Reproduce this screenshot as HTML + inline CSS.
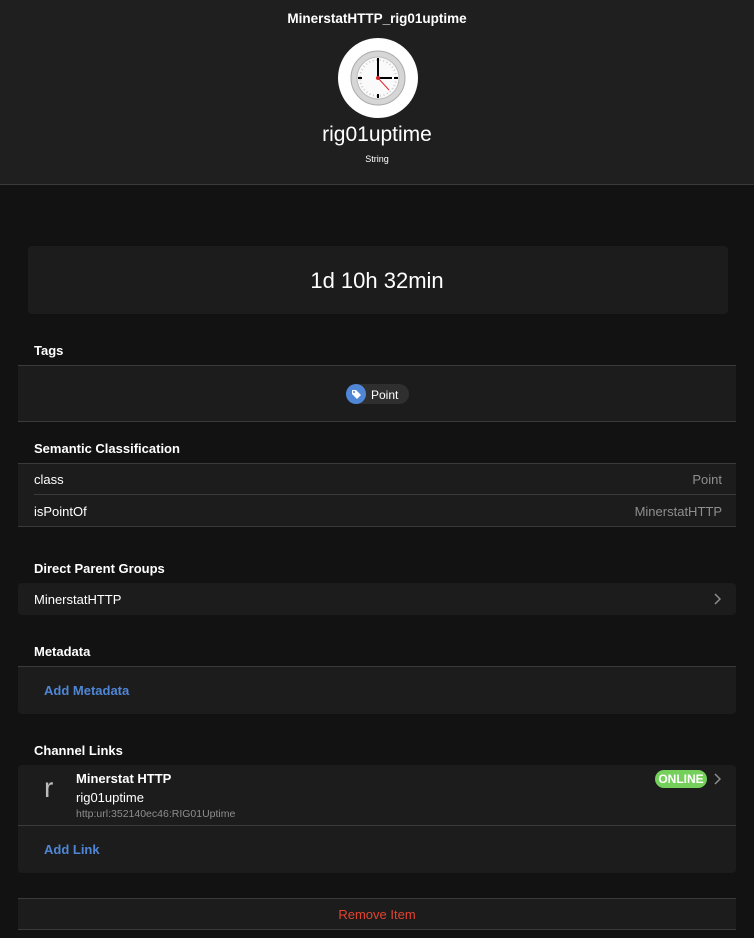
<!DOCTYPE html>
<html><head><meta charset="utf-8"><style>
*{margin:0;padding:0;box-sizing:border-box}
body{width:754px;height:938px;background:#121212;font-family:"Liberation Sans",sans-serif;color:#fff;position:relative;overflow:hidden;font-size:13px}
.a{position:absolute}
.hdr{left:0;top:0;width:754px;height:185px;background:#1f1f1f;border-bottom:1px solid #3a3a3a}
.card{background:#1c1c1c;left:18px;width:718px}
.t{font-weight:bold;font-size:13px}
.line{height:1px;background:#3a3a3a}
.g{color:#8e8e8e}
.blue{color:#4f86d6;font-weight:bold}
</style></head><body>
<div class="a hdr"></div>
<div class="a t" style="left:0;width:754px;top:11px;text-align:center;font-size:13.5px">MinerstatHTTP_rig01uptime</div>
<div class="a" style="left:338px;top:38px;width:80px;height:80px;border-radius:50%;background:#fff"></div>
<svg class="a" style="left:350px;top:50px" width="56" height="56" viewBox="0 0 56 56">
<circle cx="28" cy="28" r="27" fill="#d6d6d6" stroke="#aaa" stroke-width="1"/>
<circle cx="28" cy="28" r="21" fill="#fafafa" stroke="#bbb" stroke-width="1"/>
<circle cx="28" cy="28" r="18" fill="none" stroke="#ccc" stroke-width="2" stroke-dasharray="1 2.6"/>
<rect x="27" y="8" width="2" height="4" fill="#000"/><rect x="27" y="44" width="2" height="4" fill="#000"/>
<rect x="8" y="27" width="4" height="2" fill="#000"/><rect x="44" y="27" width="4" height="2" fill="#000"/>
<line x1="28" y1="28" x2="28" y2="11" stroke="#000" stroke-width="2"/>
<line x1="28" y1="28" x2="42" y2="28" stroke="#000" stroke-width="2"/>
<line x1="28" y1="28" x2="39" y2="40" stroke="#d22" stroke-width="1"/>
<circle cx="28" cy="28" r="2" fill="#d22"/>
</svg>
<div class="a" style="left:0;width:754px;top:123px;text-align:center;font-size:21px">rig01uptime</div>
<div class="a" style="left:0;width:754px;top:154px;text-align:center;font-size:9px">String</div>

<div class="a card" style="top:246px;height:68px;border-radius:4px;left:28px;width:700px"></div>
<div class="a" style="left:0;width:754px;top:268px;text-align:center;font-size:22px">1d 10h 32min</div>

<div class="a t" style="left:34px;top:343px">Tags</div>
<div class="a card" style="top:365px;height:57px;border-top:1px solid #3a3a3a;border-bottom:1px solid #3a3a3a"></div>
<div class="a" style="left:346px;top:384px;width:63px;height:20px;border-radius:10px;background:#2f2f2f"></div>
<div class="a" style="left:346px;top:384px;width:20px;height:20px;border-radius:50%;background:#4f86d6"></div>
<svg class="a" style="left:349px;top:387px" width="14" height="14" viewBox="0 0 14 14"><path d="M3 3h4l5 5-4 4-5-5z" fill="#fff"/><circle cx="5" cy="5" r="1" fill="#4f86d6"/></svg>
<div class="a" style="left:371px;top:388px;font-size:12px">Point</div>

<div class="a t" style="left:34px;top:441px">Semantic Classification</div>
<div class="a card" style="top:463px;height:64px;border-top:1px solid #3a3a3a;border-bottom:1px solid #3a3a3a"></div>
<div class="a line" style="left:34px;top:494px;width:702px"></div>
<div class="a" style="left:34px;top:472px">class</div>
<div class="a g" style="right:32px;top:472px">Point</div>
<div class="a" style="left:34px;top:504px">isPointOf</div>
<div class="a g" style="right:32px;top:504px">MinerstatHTTP</div>

<div class="a t" style="left:34px;top:561px">Direct Parent Groups</div>
<div class="a card" style="top:583px;height:32px;border-radius:4px"></div>
<div class="a" style="left:34px;top:592px">MinerstatHTTP</div>
<svg class="a" style="left:713px;top:593px" width="8" height="12" viewBox="0 0 8 12"><path d="M2 1l5 5-5 5" fill="none" stroke="#8e8e8e" stroke-width="1.5"/></svg>

<div class="a t" style="left:34px;top:644px">Metadata</div>
<div class="a card" style="top:666px;height:48px;border-top:1px solid #3a3a3a;border-radius:0 0 4px 4px"></div>
<div class="a blue" style="left:44px;top:683px">Add Metadata</div>

<div class="a t" style="left:34px;top:743px">Channel Links</div>
<div class="a card" style="top:765px;height:108px;border-radius:4px"></div>
<div class="a line" style="left:18px;top:825px;width:718px"></div>
<div class="a" style="left:44px;top:772px;font-size:28px;color:#bbb;font-weight:300">r</div>
<div class="a t" style="left:76px;top:771px">Minerstat HTTP</div>
<div class="a" style="left:76px;top:790px">rig01uptime</div>
<div class="a g" style="left:76px;top:808px;font-size:10.5px">http:url:352140ec46:RIG01Uptime</div>
<div class="a" style="left:655px;top:770px;width:52px;height:18px;border-radius:9px;background:#74d05a;font-size:12px;font-weight:bold;text-align:center;line-height:18px">ONLINE</div>
<svg class="a" style="left:713px;top:773px" width="8" height="12" viewBox="0 0 8 12"><path d="M2 1l5 5-5 5" fill="none" stroke="#8e8e8e" stroke-width="1.5"/></svg>
<div class="a blue" style="left:44px;top:842px">Add Link</div>

<div class="a card" style="top:898px;height:32px;border-top:1px solid #3a3a3a;border-bottom:1px solid #3a3a3a"></div>
<div class="a" style="left:0;width:754px;top:907px;text-align:center;color:#e0442f">Remove Item</div>
</body></html>
